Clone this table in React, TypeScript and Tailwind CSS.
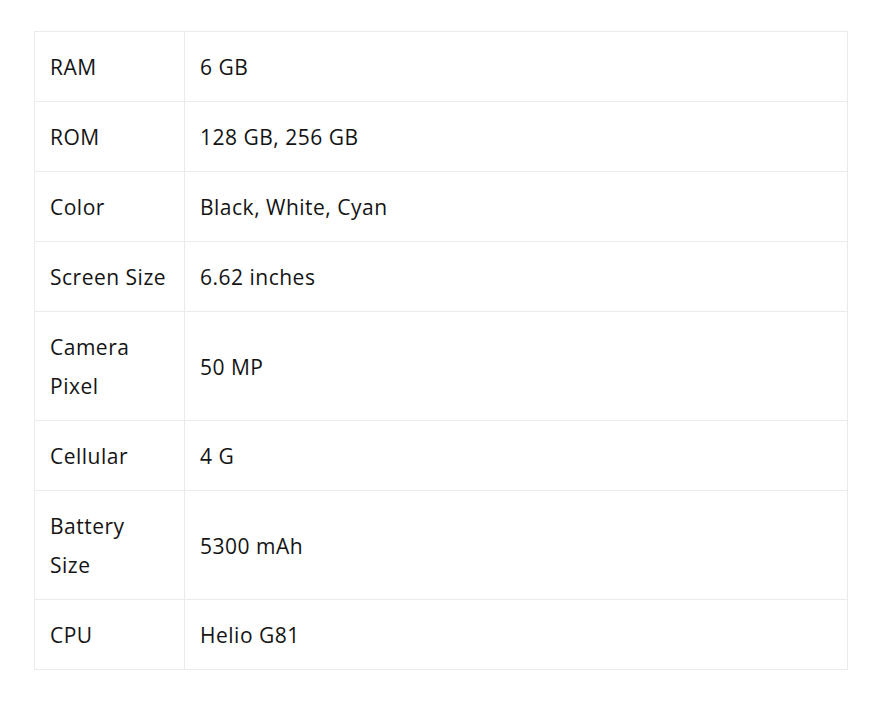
const specs: [string, string][] = [
  ['RAM', '6 GB'],
  ['ROM', '128 GB, 256 GB'],
  ['Color', 'Black, White, Cyan'],
  ['Screen Size', '6.62 inches'],
  ['Camera Pixel', '50 MP'],
  ['Cellular', '4 G'],
  ['Battery Size', '5300 mAh'],
  ['CPU', 'Helio G81'],
]

export default function App() {
  return (
    <div className="bg-white min-h-[709px] pt-[31px] pl-[34px] font-['Open_Sans',sans-serif] font-medium text-[#141414]">
      <table className="w-[814px] border-collapse text-[21px] leading-[39px] tracking-[0.5px]">
        <tbody>
          {specs.map(([k, v]) => (
            <tr key={k}>
              <td className="w-[150px] border border-[#ebebeb] px-[15px] pt-[16px] pb-[14px] align-middle">{k}</td>
              <td className="border border-[#ebebeb] px-[15px] pt-[16px] pb-[14px] align-middle">{v}</td>
            </tr>
          ))}
        </tbody>
      </table>
    </div>
  )
}
